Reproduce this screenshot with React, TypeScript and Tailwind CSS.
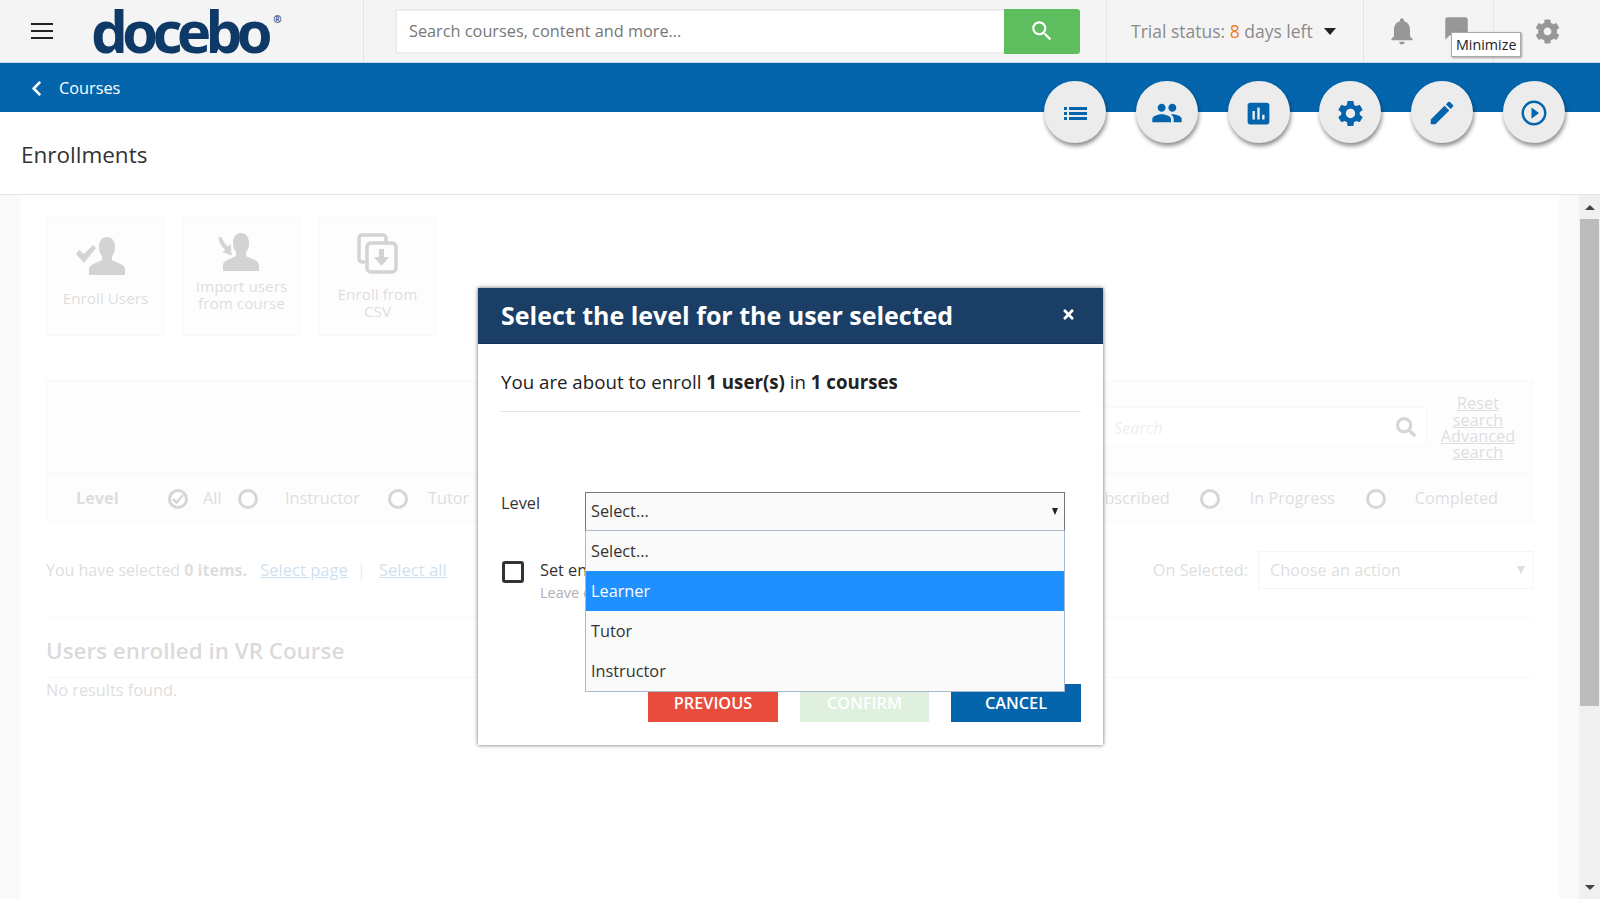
import React from "react";
import {
  MdPeople,
  MdAssessment,
  MdSettings,
  MdEdit,
  MdPlayCircleOutline,
  MdNotifications,
  MdChatBubble,
  MdSearch,
} from "react-icons/md";
import { FaSearch, FaCog, FaChevronLeft, FaTimes } from "react-icons/fa";

const ListIcon = () => (
  <svg width="23" height="13" viewBox="0 0 23 13" fill="currentColor">
    <rect x="0" y="0" width="3" height="3" />
    <rect x="5" y="0" width="18" height="3" />
    <rect x="0" y="5" width="3" height="3" />
    <rect x="5" y="5" width="18" height="3" />
    <rect x="0" y="10" width="3" height="3" />
    <rect x="5" y="10" width="18" height="3" />
  </svg>
);

const actionButtons = [
  { id: "list", icon: <ListIcon /> },
  { id: "users", icon: <MdPeople size={32} /> },
  { id: "report", icon: <MdAssessment size={29} /> },
  { id: "settings", icon: <MdSettings size={31} /> },
  { id: "edit", icon: <MdEdit size={30} /> },
  { id: "play", icon: <MdPlayCircleOutline size={30} /> },
];

const personPath =
  "M19 0c-5 0-8 4-8 10 0 4 1 7 3 9v4c-3 2-13 4-13 9v6h36v-6c0-5-10-7-13-9v-4c2-2 3-5 3-9 0-6-3-10-8-10z";

const EnrollIcon = () => (
  <svg width="59" height="38" viewBox="0 0 59 38" fill="#222">
    <path d={personPath} transform="translate(12 0)" />
    <path d="M0 17l3-4 5 4 9-9 3 3-12 15z" />
  </svg>
);

const ImportIcon = () => (
  <svg width="47" height="38" viewBox="0 0 47 38" fill="#222">
    <path d={personPath} transform="translate(4 0)" />
    <path d="M0 4h4c1 4 3 7 6 9l3-2 1 12-10-4 3-2c-4-3-6-8-7-13z" stroke="#fff" strokeWidth="0.500" />
  </svg>
);

const CsvIcon = () => (
  <svg width="41" height="41" viewBox="0 0 41 41" fill="none" stroke="#222" strokeWidth="3.500">
    <path d="M7 29H5a3 3 0 0 1-3-3V5a3 3 0 0 1 3-3h21a3 3 0 0 1 3 3v3" strokeLinecap="round" />
    <rect x="10" y="10" width="29" height="29" rx="4" />
    <path d="M22 16h5v8h5l-7.500 9-7.500-9h5z" fill="#222" stroke="none" />
  </svg>
);

const Tile = ({ icon, label, labelClass }: { icon: React.ReactNode; label: React.ReactNode; labelClass: string }) => (
  <div className="flex h-[119px] w-[119px] flex-col items-center border border-[#ddd] bg-[#f3f3f3] text-center text-[15.300px] leading-[17px] text-[#555]">
    {icon}
    <div className={labelClass}>{label}</div>
  </div>
);

const Radio = ({ checked }: { checked?: boolean }) => (
  <span className="flex h-5 w-5 shrink-0 items-center justify-center rounded-full border-[3px] border-[#333] bg-white">
    {checked && (
      <svg width="12" height="10" viewBox="0 0 12 10" fill="none" stroke="#333" strokeWidth="2.500">
        <path d="M1 5l3.500 3.500L11 1" />
      </svg>
    )}
  </span>
);

export default function App() {
  return (
    <div className="relative flex h-screen w-full flex-col overflow-hidden bg-white font-['Open_Sans',sans-serif] text-[16.300px] text-[#333]">
      {/* top bar */}
      <div className="flex h-[63px] shrink-0 border-b border-[#c9d3dd] bg-[#f4f4f4]">
        <div className="flex w-[364px] shrink-0 items-center border-r border-[#e4e4e4] pl-[31px]">
          <div className="flex w-[22px] flex-col gap-[5px]">
            <span className="h-[2px] bg-[#222]" />
            <span className="h-[2px] bg-[#222]" />
            <span className="h-[2px] bg-[#222]" />
          </div>
          <div className="ml-[38px] flex items-start font-['Noto_Sans',sans-serif] text-[#0f3a68]">
            <span className="text-[58px] leading-[62px] font-bold tracking-[-5.700px]">docebo</span>
            <span className="mt-[14px] ml-[6px] text-[10px] leading-none font-semibold">®</span>
          </div>
        </div>
        <div className="flex w-[743px] shrink-0 items-center border-r border-[#e4e4e4] pl-[31px]">
          <div className="flex h-[45px] w-[685px] overflow-hidden rounded-[3px]">
            <div className="flex flex-1 items-center border-2 border-r-0 border-[#ececec] bg-white pl-[12px] text-[#777]">
              Search courses, content and more...
            </div>
            <div className="flex w-[76px] items-center justify-center bg-[#5ebd5e] text-white">
              <MdSearch size={26} />
            </div>
          </div>
        </div>
        <div className="flex w-[257px] shrink-0 items-center border-r border-[#e4e4e4] pl-[24px] text-[17.500px] text-[#8b8b8b]">
          <span>
            Trial status: <span className="text-[#ee7d22]">8</span> days left
          </span>
          <span className="ml-[11px] h-0 w-0 border-x-[6px] border-t-[7px] border-x-transparent border-t-[#222]" />
        </div>
        <div className="flex w-[130px] shrink-0 items-center border-r border-[#e4e4e4] pl-[22px] text-[#979797]">
          <MdNotifications size={32} />
          <MdChatBubble size={27} className="ml-[25px] -mt-[6px]" />
        </div>
        <div className="flex flex-1 items-center pl-[41px] text-[#979797]">
          <FaCog size={25} />
        </div>
      </div>

      {/* breadcrumb */}
      <div className="flex h-[49px] shrink-0 items-center bg-[#0465ac] pt-[2px] pl-[28px] text-white">
        <FaChevronLeft size={17} />
        <span className="ml-[14px]">Courses</span>
      </div>

      {/* title */}
      <div className="flex h-[83px] shrink-0 items-center border-b border-[#e4e4e4] pt-[4px] pl-[21px] text-[22.500px] text-[#333]">
        Enrollments
      </div>

      {/* page */}
      <div className="mb-px flex min-h-0 flex-1">
        <div className="relative flex-1 overflow-hidden bg-[#e8e8e8] px-5">
          <div className="h-full bg-white px-[26px] pt-[22px]">
            <div className="flex gap-[17px]">
              <Tile icon={<div className="mt-[19px]"><EnrollIcon /></div>} label="Enroll Users" labelClass="mt-[15px]" />
              <Tile icon={<div className="mt-[15px]"><ImportIcon /></div>} label={<>Import users<br />from course</>} labelClass="mt-[7px]" />
              <Tile icon={<div className="mt-[15px]"><CsvIcon /></div>} label={<>Enroll from<br />CSV</>} labelClass="mt-[12px]" />
            </div>

            <div className="mt-[44px] border border-[#ddd] bg-[#f3f3f3]">
              <div className="flex h-[93px] items-center justify-end border-b border-[#ddd] pr-[15px]">
                <div className="flex h-[40px] w-[400px] items-center justify-between border border-[#ddd] bg-white pr-[10px] pl-[86px] text-[#aaa] italic">
                  <span className="pt-[2px]">Search</span>
                  <FaSearch size={20} className="text-[#333]" />
                </div>
                <div className="ml-[12px] w-[78px] pt-[2px] text-center leading-[16.300px] text-[#555] underline">
                  Reset search Advanced search
                </div>
              </div>
              <div className="flex h-[47px] items-center pt-[2px] text-[#555]">
                <span className="ml-[29px] w-[92px] font-bold">Level</span>
                <Radio checked />
                <span className="ml-[15px] w-[35px]">All</span>
                <Radio />
                <span className="ml-[27px] w-[103px]">Instructor</span>
                <Radio />
                <span className="ml-[20px]">Tutor</span>
                <div className="ml-auto flex items-center pr-[34px]">
                  <span className="mr-[30px]">Subscribed</span>
                  <Radio />
                  <span className="ml-[30px] w-[116px]">In Progress</span>
                  <Radio />
                  <span className="ml-[29px]">Completed</span>
                </div>
              </div>
            </div>

            <div className="mt-[29px] flex h-[38px] items-center text-[#555]">
              <span className="text-[16px]">
                You have selected <b>0 items.</b>
              </span>
              <span className="ml-[13px] text-[16.600px] text-[#0465ac] underline">Select page</span>
              <span className="mr-[13px] ml-[9px] text-[#888]">|</span>
              <span className="text-[16.600px] text-[#0465ac] underline">Select all</span>
              <span className="ml-auto">On Selected:</span>
              <div className="ml-[10px] flex h-[38px] w-[275px] items-center justify-between border border-[#ccc] bg-white pr-[7px] pl-[11px]">
                Choose an action
                <span className="h-0 w-0 border-x-[4px] border-t-[8px] border-x-transparent border-t-[#555]" />
              </div>
            </div>

            <div className="mt-[28px] flex h-[61px] items-center border-y border-[#ddd] pt-[6px] text-[22.400px] font-semibold text-[#444]">
              Users enrolled in VR Course
            </div>
            <div className="text-[#555]">No results found.</div>
          </div>
          {/* modal backdrop */}
          <div className="absolute inset-0 bg-white/80" />
        </div>

        {/* scrollbar */}
        <div className="flex w-[21px] shrink-0 flex-col items-center bg-[#f0f0f0]">
          <div className="flex h-[24px] items-center justify-center">
            <span className="h-0 w-0 border-x-[5px] border-b-[5px] border-x-transparent border-b-[#444]" />
          </div>
          <div className="h-[487px] w-[19px] bg-[#bcbcbc]" />
          <div className="mt-auto flex h-[24px] items-center justify-center">
            <span className="h-0 w-0 border-x-[5px] border-t-[5px] border-x-transparent border-t-[#444]" />
          </div>
        </div>
      </div>

      {/* floating course actions */}
      <div className="absolute top-[81px] right-[35px] flex gap-[29.800px]">
        {actionButtons.map((b) => (
          <div
            key={b.id}
            className="flex h-[62px] w-[62px] items-center justify-center rounded-full bg-[#ececec] pt-[2px] text-[#0465ac] shadow-[1px_3px_4px_rgba(0,0,0,0.45)]"
          >
            {b.icon}
          </div>
        ))}
      </div>

      {/* tooltip */}
      <div className="absolute top-[32px] left-[1451px] border border-[#aaa] bg-white px-[4px] py-[1px] text-[14.300px] leading-[21px] text-[#222] shadow-[1px_1px_2px_rgba(0,0,0,0.35)]">
        Minimize
      </div>

      {/* dialog */}
      <div className="absolute top-[288px] left-[478px] h-[457px] w-[625px] bg-white shadow-[0_0_4px_rgba(0,0,0,0.6)]">
        <div className="flex h-[56px] items-center justify-between border-b border-[#12305a] bg-[#1a3e66] pr-[27px] pl-[23px] text-white">
          <span className="text-[25px] font-bold">Select the level for the user selected</span>
          <FaTimes size={15} className="-mt-[3px]" />
        </div>
        <div className="pr-[22px] pl-[23px]">
          <div className="flex h-[68px] items-center border-b border-[#e4e4e4] pt-[9px] text-[18.700px] text-[#222]">
            <span>
              You are about to enroll <b>1 user(s)</b> in <b>1 courses</b>
            </span>
          </div>
          <div className="mt-[80px] flex items-start">
            <span className="mt-[1px] w-[84px] leading-[20px] text-[#333]">Level</span>
            <div className="relative w-[480px]">
              <div className="flex h-[39px] items-center justify-between border border-[#767676] border-b-[#a9b8cc] bg-[#fafafa] pr-[6px] pl-[5px] text-[#333]">
                Select...
                <span className="h-0 w-0 border-x-[3.500px] border-t-[7px] border-x-transparent border-t-[#222]" />
              </div>
              <div className="absolute top-full left-0 z-10 w-[480px] border-x border-b border-[#a9b8cc] bg-[#fafafa] text-[#333]">
                <div className="flex h-[40px] items-center pl-[5px]">Select...</div>
                <div className="flex h-[40px] items-center bg-[#1e90ff] pl-[5px] text-white">Learner</div>
                <div className="flex h-[40px] items-center pl-[5px]">Tutor</div>
                <div className="flex h-[40px] items-center pl-[5px]">Instructor</div>
              </div>
            </div>
          </div>
          <div className="mt-[29px] flex">
            <span className="mt-[1px] ml-[1px] h-[22px] w-[22px] rounded-[3px] border-[3px] border-[#333]" />
            <div className="ml-[16px] leading-[20px]">
              <div>Set enrollment deadline</div>
              <div className="mt-[3px] text-[14.500px] text-[#b0b0b0]">Leave empty</div>
            </div>
          </div>
          <div className="mt-[81px] flex justify-end gap-[22px] font-semibold text-white">
            <div className="flex h-[38px] w-[130px] items-center justify-center bg-[#e84c3d]">PREVIOUS</div>
            <div className="flex h-[38px] w-[129px] items-center justify-center bg-[#dff0df]">CONFIRM</div>
            <div className="flex h-[38px] w-[130px] items-center justify-center bg-[#0465ac]">CANCEL</div>
          </div>
        </div>
      </div>
    </div>
  );
}
